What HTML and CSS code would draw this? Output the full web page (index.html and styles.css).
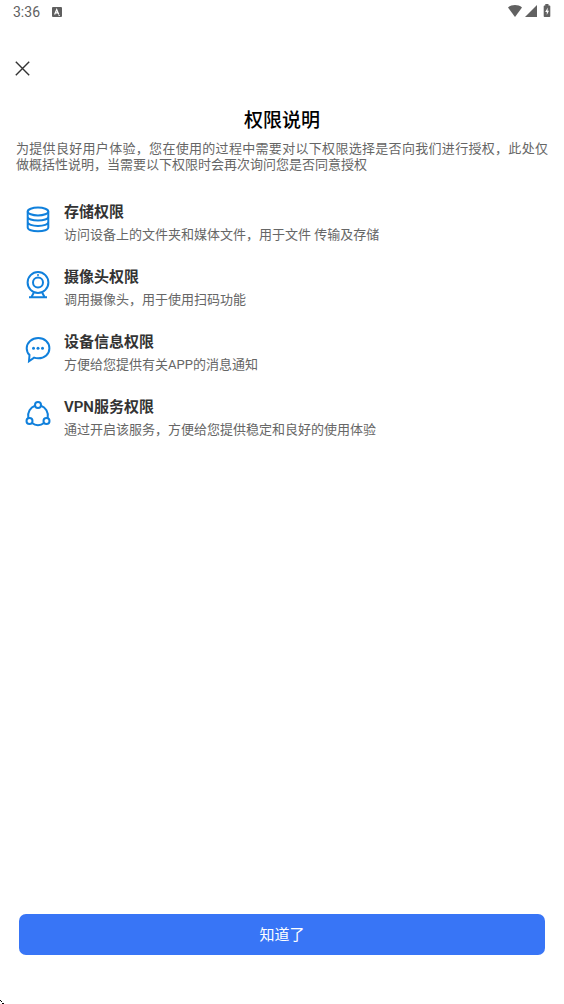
FILE: index.html
```html
<!DOCTYPE html>
<html lang="zh-CN">
<head>
<meta charset="utf-8">
<meta name="viewport" content="width=device-width, initial-scale=1">
<title>权限说明</title>
<link rel="stylesheet" href="styles.css">
</head>
<body>
<div class="screen">
  <header class="status">
    <span class="time">3:36</span>
    <svg class="badge" width="10" height="10" viewBox="0 0 10 10" aria-hidden="true"><rect width="10" height="10" rx="1" fill="#5f5f5f"/><path d="M2.600 7.400 4.700 2.600 6.800 7.400M3.400 5.900h2.600" fill="none" stroke="#fff" stroke-width="1.200"/><path d="M6.500 8.500h1.500" stroke="#fff" stroke-width=".8"/></svg>
    <div class="signals">
      <svg width="16" height="14" viewBox="0 0 16 14" aria-hidden="true"><path d="M1 3.400C5 .2 11 .2 15 3.400L8 13z" fill="#616161"/></svg>
      <svg width="12" height="14" viewBox="0 0 12 14" aria-hidden="true"><path d="M12 1v12H0z" fill="#616161"/></svg>
      <svg class="battery" width="8" height="14" viewBox="0 0 8 14" aria-hidden="true"><path d="M2.300 0h3.200v1.400H6.500q.8 0 .8.800v10q0 .8-.8.800h-5q-.8 0-.8-.800v-10q0-.8.8-.800h.8z" fill="#616161"/><path d="M4.800 3.500 2.200 8h1.600v3L6 6.700H4.500z" fill="#fff"/></svg>
    </div>
  </header>
  <button class="close" type="button" aria-label="关闭">
    <svg width="15" height="15" viewBox="0 0 15 15" aria-hidden="true"><path d="M.8.8l13.400 13.400M14.200.8.8 14.200" stroke="#333" stroke-width="1.400" fill="none"/></svg>
  </button>
  <main class="content">
    <h1 class="title">权限说明</h1>
    <p class="intro">为提供良好用户体验，您在使用的过程中需要对以下权限选择是否向我们进行授权，此处仅做概括性说明，当需要以下权限时会再次询问您是否同意授权</p>
    <ul class="list">
      <li class="item">
        <svg class="icon" viewBox="0 0 26 28" aria-hidden="true"><ellipse cx="13" cy="5.500" rx="10.300" ry="3.900"/><path d="M2.700 5.500v16c0 2.200 4.600 3.800 10.300 3.800s10.300-1.600 10.300-3.800v-16M2.700 10.800c0 2.200 4.600 3.800 10.300 3.800s10.300-1.600 10.300-3.800M2.700 16.100c0 2.200 4.600 3.800 10.300 3.800s10.300-1.600 10.300-3.800"/></svg>
        <div><h2 class="name">存储权限</h2><p class="desc">访问设备上的文件夹和媒体文件，用于文件 传输及存储</p></div>
      </li>
      <li class="item">
        <svg class="icon" viewBox="0 0 26 28" aria-hidden="true"><circle cx="13" cy="11.500" r="10.400"/><circle cx="13" cy="11.500" r="5"/><circle class="dot" cx="13" cy="4" r="1"/><path d="M9 21.200 6.500 26M17 21.200 19.500 26M4 26.300h18"/></svg>
        <div><h2 class="name">摄像头权限</h2><p class="desc">调用摄像头，用于使用扫码功能</p></div>
      </li>
      <li class="item">
        <svg class="icon" viewBox="0 0 26 28" aria-hidden="true"><path d="M13.300 2C19.600 2 24.400 6.400 24.400 12.200S19.600 22.300 13.300 22.300c-1.500 0-2.900-.2-4.200-.7L4 25.200l.5-6.200C2.700 17.200 1.700 14.900 1.700 12.200 1.700 6.400 7 2 13.300 2z"/><circle class="dot" cx="8.500" cy="12.300" r="1.500"/><circle class="dot" cx="13" cy="12.300" r="1.500"/><circle class="dot" cx="17.500" cy="12.300" r="1.500"/></svg>
        <div><h2 class="name">设备信息权限</h2><p class="desc">方便给您提供有关APP的消息通知</p></div>
      </li>
      <li class="item">
        <svg class="icon" viewBox="0 0 26 28" aria-hidden="true"><circle cx="13" cy="4" r="3"/><circle cx="4.500" cy="19.900" r="3"/><circle cx="21.500" cy="19.900" r="3"/><path d="M10 4.700C5.500 6.200 2.200 11.200 3.300 17.100M16 4.700c4.500 1.500 7.800 6.500 6.700 12.400M7 21.900c3.500 3 8.500 3 12 0"/></svg>
        <div><h2 class="name">VPN服务权限</h2><p class="desc">通过开启该服务，方便给您提供稳定和良好的使用体验</p></div>
      </li>
    </ul>
  </main>
  <footer class="footer"><button class="confirm" type="button">知道了</button></footer>
  <svg class="pointer" width="4" height="4" viewBox="0 0 4 4" aria-hidden="true"><path d="M0 0h1v1H0zM1 1h1v1H1zM2 3h2v1H2z" fill="#000"/></svg>
</div>
</body>
</html>
```
FILE: styles.css
```css
* {
  box-sizing: border-box;
}

body {
  margin: 0;
  background: #fff;
  color: #333;
  font-family: Roboto, "Noto Sans CJK SC", sans-serif;
}

h1, h2, p, ul {
  margin: 0;
  padding: 0;
}

button {
  border: 0;
  font: inherit;
  cursor: pointer;
}

svg {
  display: block;
}

.screen {
  position: relative;
  display: flex;
  flex-direction: column;
  min-height: 100vh;
}

.status {
  display: flex;
  align-items: center;
  height: 24px;
  padding: 0 13px;
  color: #616161;
}

.time {
  font-size: 14px;
  font-weight: 400;
  line-height: 24px;
}

.badge {
  margin-left: 12px;
}

.signals {
  display: flex;
  align-items: center;
  gap: 2px;
  margin-left: auto;
  padding-bottom: 2px;
}

.battery {
  margin-left: 4px;
}

.close {
  align-self: flex-start;
  margin-top: 29px;
  padding: 8px 15px;
  background: none;
}

.content {
  flex: 1;
  padding: 24px 16px;
}

.title {
  color: #000;
  font-size: 19px;
  font-weight: 500;
  line-height: 26px;
  text-align: center;
}

.intro {
  margin-top: 7px;
  color: #666;
  font-size: 13px;
  line-height: 16px;
  text-align: justify;
}

.list {
  display: grid;
  gap: 19px;
  margin-top: 28px;
  padding: 0 8px;
  list-style: none;
}

.item {
  display: flex;
  gap: 13px;
  padding-left: 1px;
}

.icon {
  flex: none;
  width: 26px;
  height: 28px;
  margin-top: 5px;
  fill: none;
  stroke: #1080dc;
  stroke-width: 2;
}

.dot {
  fill: #1080dc;
  stroke: none;
}

.name {
  font-size: 15px;
  font-weight: 600;
  line-height: 22px;
}

.desc {
  color: #666;
  font-size: 13px;
  line-height: 24px;
}

.footer {
  padding: 0 19px 49px;
}

.confirm {
  width: 100%;
  padding: 10px 8px 8px;
  border-radius: 7px;
  background: #3875f6;
  color: #fff;
  font-size: 15px;
  line-height: 23px;
}

.pointer {
  position: absolute;
  bottom: 0;
  left: 0;
}
```
